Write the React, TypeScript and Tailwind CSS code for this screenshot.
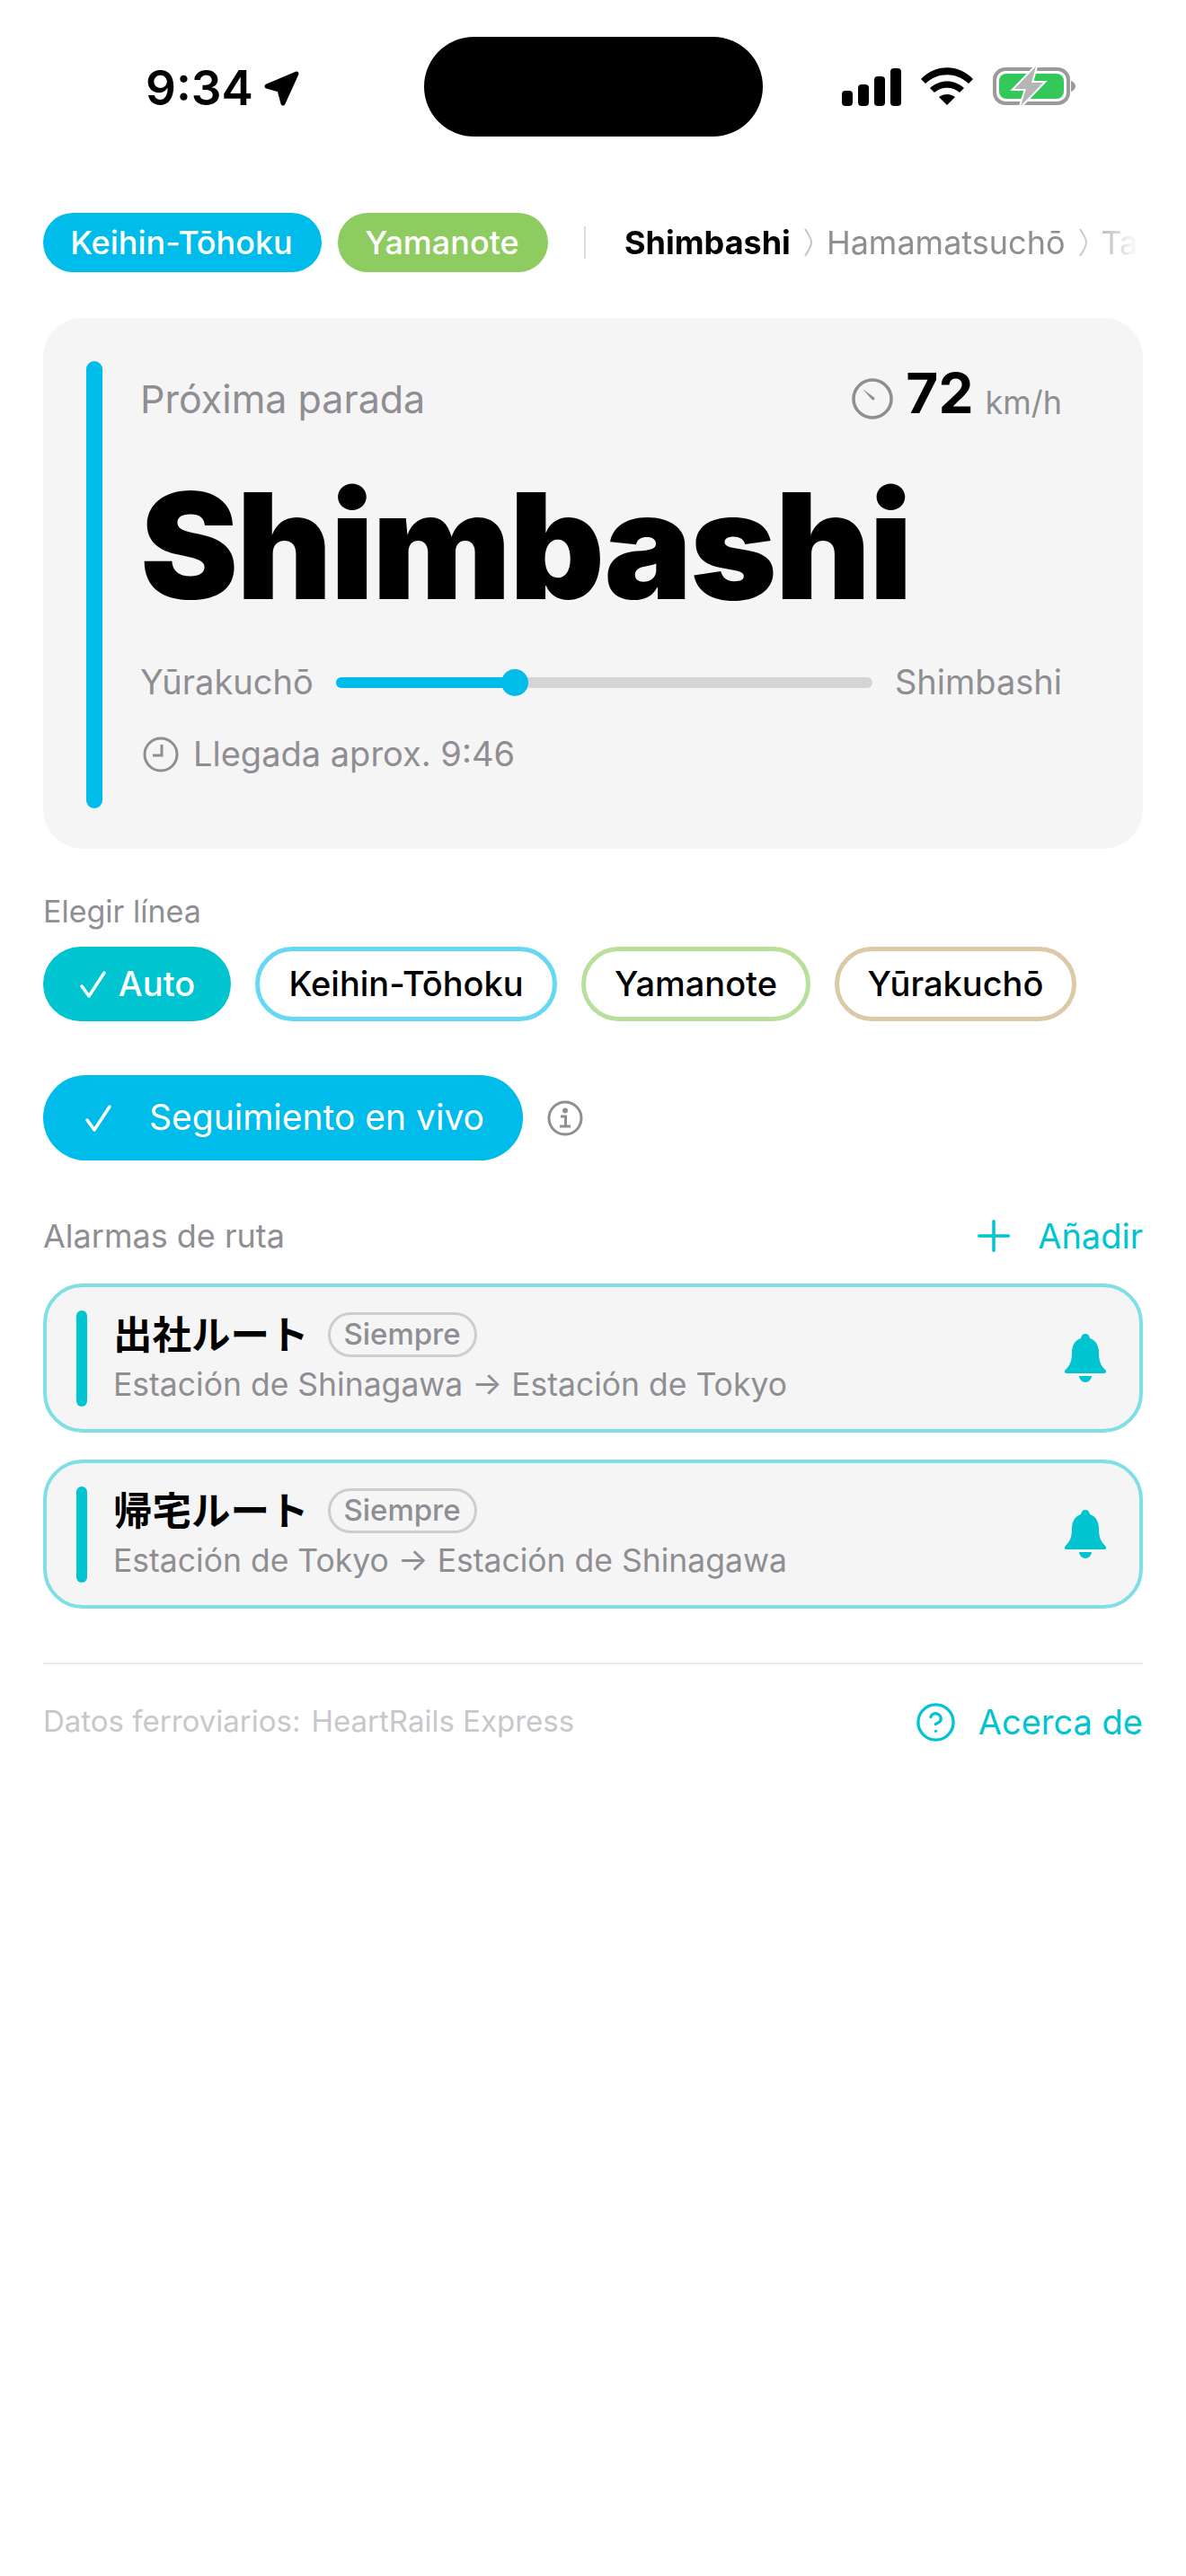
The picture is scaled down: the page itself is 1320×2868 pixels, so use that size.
import { CircleHelp, Plus } from "lucide-react";

const font = { fontFamily: '"Inter", "Noto Sans CJK JP", "Liberation Sans", sans-serif' };

function Signal() {
  return (
    <svg width="66" height="42" viewBox="0 0 66 42" fill="#000">
      <rect x="0" y="25" width="12" height="17" rx="4" />
      <rect x="18" y="18" width="12" height="24" rx="4" />
      <rect x="36" y="9" width="12" height="33" rx="4" />
      <rect x="54" y="0" width="12" height="42" rx="4" />
    </svg>
  );
}

function Wifi() {
  return (
    <svg width="58" height="42" viewBox="0 0 58 42" fill="#000">
      <path d="M0 13C16-4 42-4 58 13l-5 5C39 5 19 5 5 18z" />
      <path d="M10 23c11-10 27-10 38 0l-5 5c-8-7-20-7-28 0z" />
      <path d="M20 33c5-4 13-4 18 0l-9 9z" />
    </svg>
  );
}

function Battery() {
  return (
    <svg width="92" height="44" viewBox="0 0 92 44">
      <rect x="2" y="3" width="82" height="38" rx="12" fill="none" stroke="#9a9a9a" strokeWidth="4" />
      <rect x="7" y="8" width="72" height="28" rx="8" fill="#34C759" />
      <path d="M87 16c3 1 5 3 5 6s-2 5-5 6z" fill="#9a9a9a" />
      <path d="M48 0 24 25h13l-6 19 25-26H43z" fill="#b5b5b5" stroke="#fff" strokeWidth="4" paintOrder="stroke" />
    </svg>
  );
}

function Gauge() {
  return (
    <svg width="46" height="46" viewBox="0 0 46 46" fill="none">
      <circle cx="23" cy="23" r="21" stroke="#8E8E93" strokeWidth="3.5" />
      <path d="M12 12l13 9.5c1.500 1.500-.5 4-2.500 2.500z" fill="#8E8E93" />
    </svg>
  );
}

function Crumb() {
  return (
    <svg width="12" height="32" viewBox="0 0 12 32" fill="none" className="shrink-0">
      <path d="M2 1c4 6 7 10 7 15S6 25 2 31" stroke="#c4c4c6" strokeWidth="2" />
    </svg>
  );
}

// thin, tall iOS style checkmark
function Tick({ size }: { size: number }) {
  return (
    <svg width={size} height={size} viewBox="0 0 32 32" fill="none" stroke="#fff" strokeWidth="3.500" strokeLinecap="round" strokeLinejoin="round">
      <path d="M3 18l8 11L28 3" />
    </svg>
  );
}

function BellFill() {
  return (
    <svg width="48" height="54" viewBox="0 0 48 54" fill="#00C4D0">
      <path d="M24 0c3 0 4.500 2 5 5 6.500 2 10 8 10 16 0 9 2 14 7 19 2 2 1.500 4-1.500 4h-41C.5 44 0 42 2 40c5-5 7-10 7-19 0-8 3.500-14 10-16 .5-3 2-5 5-5z" />
      <path d="M17 47h14c-.5 4-3.500 7-7 7s-6.500-3-7-7z" />
    </svg>
  );
}

function Chip({ label, border, width }: { label: string; border: string; width: string }) {
  return (
    <div className={`flex h-[83px] items-center justify-center rounded-full border-[5px] bg-white text-[38px] font-medium text-black ${border} ${width}`}>
      {label}
    </div>
  );
}

function AlarmCard({ title, route }: { title: string; route: string }) {
  return (
    <div className="flex h-[166px] items-center rounded-[44px] border-[4px] border-[#7FDFE6] bg-[#F5F5F5] pl-[33px] pr-[36px]">
      <div className="h-[107px] w-[12px] rounded-full bg-[#00C4D0]" />
      <div className="ml-[29px] flex-1">
        <div className="flex items-center gap-[21px]">
          <span className="text-[43.500px] font-bold leading-[50px] text-black">{title}</span>
          <span className="flex h-[50px] w-[166px] items-center justify-center rounded-full border-[3px] border-[#CDCDCD] text-[33px] font-medium text-[#8E8E93]">
            Siempre
          </span>
        </div>
        <div className="mt-[9px] text-[35.500px] leading-[44px] text-[#8E8E93]">{route}</div>
      </div>
      <BellFill />
    </div>
  );
}

export default function App() {
  return (
    <div style={font} className="min-h-[2868px] w-[1320px] bg-white">
      {/* status bar */}
      <div className="flex h-[237px] items-start">
        <div className="ml-[162px] mt-[66px] w-[118px] text-[53px] font-semibold leading-[64px] text-black">9:34</div>
        <svg width="44" height="44" viewBox="0 0 44 44" className="ml-[11px] mt-[76px]">
          <path d="M6 20 39 6 24 39 20 24z" fill="#000" stroke="#000" strokeWidth="5" strokeLinejoin="round" />
        </svg>
        <div className="ml-[137px] mt-[41px] h-[111px] w-[377px] rounded-full bg-black" />
        <div className="ml-[88px] mt-[76px]">
          <Signal />
        </div>
        <div className="ml-[22px] mt-[75px]">
          <Wifi />
        </div>
        <div className="ml-[22px] mt-[74px]">
          <Battery />
        </div>
      </div>

      <div className="px-[48px]">
        {/* current lines + upcoming stations */}
        <div className="flex h-[66px] items-center">
          <div className="flex h-[66px] w-[310px] items-center justify-center rounded-full bg-[#00BCEB] pr-[2px] text-[36px] font-medium text-white">
            Keihin-Tōhoku
          </div>
          <div className="ml-[18px] flex h-[66px] w-[234px] items-center justify-center rounded-full bg-[#8ECB60] pr-[2px] text-[36px] font-medium text-white">
            Yamanote
          </div>
          <div className="ml-[40px] h-[36px] w-[2px] bg-[#DCDCDC]" />
          <div className="ml-[43px] flex w-[572px] items-center gap-[14px] overflow-hidden whitespace-nowrap text-[36px] [mask-image:linear-gradient(to_right,black_88%,transparent)]">
            <span className="font-bold text-black">Shimbashi</span>
            <Crumb />
            <span className="text-[#8E8E93]">Hamamatsuchō</span>
            <Crumb />
            <span className="text-[#8E8E93]">Ta</span>
          </div>
        </div>

        {/* next stop card */}
        <div className="mt-[51px] flex h-[591px] items-start rounded-[44px] bg-[#F5F5F5] pl-[48px] pr-[90px] pt-[48px]">
          <div className="h-[498px] w-[18px] rounded-full bg-[#00BCEB]" />
          <div className="ml-[42px] mt-[7px] flex-1">
            <div className="flex h-[70px] items-center justify-between">
              <span className="text-[43px] text-[#8E8E93]">Próxima parada</span>
              <div className="flex items-center">
                <Gauge />
                <span className="mb-[13px] ml-[14px] text-[62px] font-bold leading-[60px] text-black">72</span>
                <span className="ml-[13px] mt-[8px] text-[36px] text-[#8E8E93]">km/h</span>
              </div>
            </div>
            <div className="mt-[34px] text-[164px] font-black leading-[190px] tracking-[-2px] text-black">
              Shimbashi
            </div>
            <div className="mt-[28px] flex items-center">
              <span className="text-[38px] text-[#8E8E93]">Yūrakuchō</span>
              <div className="relative mx-[25px] h-[12px] flex-1 rounded-full bg-[#D4D4D6]">
                <div className="h-full w-[32%] rounded-full bg-[#00BCEB]" />
                <div className="absolute left-[184px] top-[-9px] h-[30px] w-[30px] rounded-full bg-[#00BCEB]" />
              </div>
              <span className="text-[38px] text-[#8E8E93]">Shimbashi</span>
            </div>
            <div className="mt-[23px] flex items-center gap-[16px] text-[38px] text-[#8E8E93]">
              <svg width="40" height="40" viewBox="0 0 40 40" fill="none" stroke="#8E8E93" strokeWidth="3" className="ml-[3px]">
                <circle cx="20" cy="20" r="18" />
                <path d="M21 9v12H11" />
              </svg>
              Llegada aprox. 9:46
            </div>
          </div>
        </div>

        {/* line picker */}
        <div className="mt-[48px] text-[34px] leading-[44px] text-[#8E8E93]">Elegir línea</div>
        <div className="mt-[17px] flex gap-[27px]">
          <div className="flex h-[83px] w-[209px] items-center justify-center gap-[12px] rounded-full bg-[#00C4D0] text-[38px] font-medium text-white">
            <Tick size={32} />
            Auto
          </div>
          <Chip label="Keihin-Tōhoku" border="border-[#66D8F3]" width="w-[336px]" />
          <Chip label="Yamanote" border="border-[#B8E09C]" width="w-[255px]" />
          <Chip label="Yūrakuchō" border="border-[#DCC9A8]" width="w-[269px]" />
        </div>

        {/* live tracking */}
        <div className="mt-[60px] flex items-center">
          <div className="flex h-[95px] w-[534px] items-center rounded-full bg-[#00BCEB] pl-[46px] text-[39px] text-white">
            <Tick size={32} />
            <span className="ml-[40px]">Seguimiento en vivo</span>
          </div>
          <svg width="40" height="40" viewBox="0 0 40 40" fill="none" className="ml-[27px]" stroke="#8E8E93" strokeWidth="3">
            <circle cx="20" cy="20" r="18" />
            <path d="M15 18h5.500v11M14 29h12" />
            <circle cx="20" cy="11.500" r="1.500" fill="#8E8E93" />
          </svg>
        </div>

        {/* route alarms */}
        <div className="mt-[62px] flex h-[44px] items-center justify-between">
          <span className="text-[36px] text-[#8E8E93]">Alarmas de ruta</span>
          <div className="flex items-center gap-[21px] text-[38px] text-[#00C4D0]">
            <Plus size={56} strokeWidth={1.5} />
            Añadir
          </div>
        </div>
        <div className="mt-[31px] flex flex-col gap-[30px]">
          <AlarmCard title="出社ルート" route="Estación de Shinagawa → Estación de Tokyo" />
          <AlarmCard title="帰宅ルート" route="Estación de Tokyo → Estación de Shinagawa" />
        </div>

        {/* footer */}
        <div className="mt-[60px] h-[2px] bg-[#EBEBED]" />
        <div className="mt-[42px] flex h-[44px] items-center justify-between">
          <span className="flex gap-[12px] text-[33px] text-[#C7C7CC]">
            <span>Datos ferroviarios:</span>
            <span>HeartRails Express</span>
          </span>
          <div className="flex items-center gap-[24px] text-[38px] text-[#00C4D0]">
            <CircleHelp size={47} strokeWidth={1.7} />
            Acerca de
          </div>
        </div>
      </div>
    </div>
  );
}
